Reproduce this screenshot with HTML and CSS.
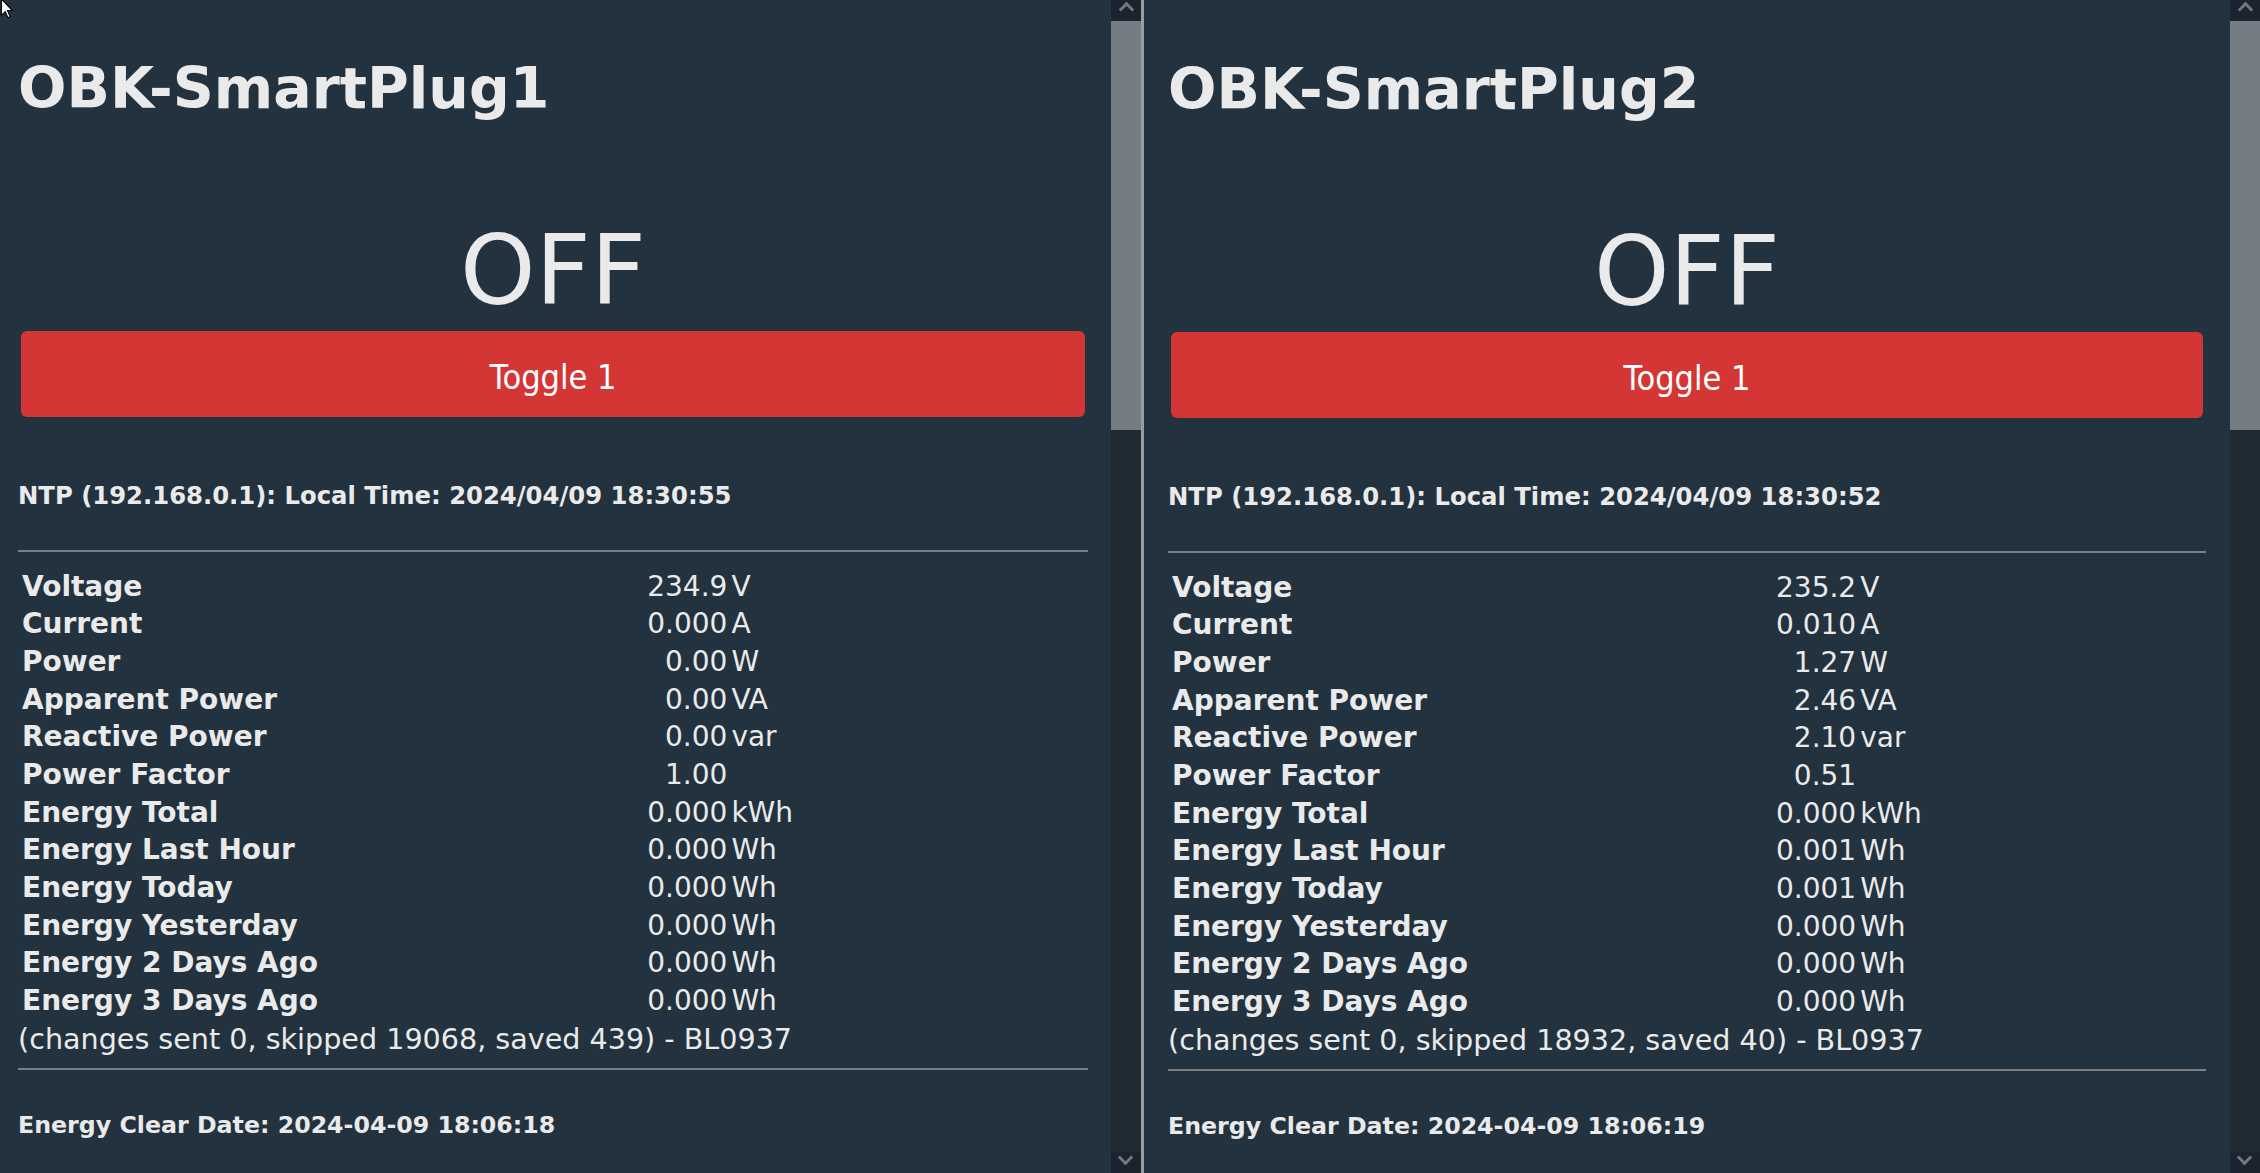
FILE: index.html
```html
<!DOCTYPE html>
<html lang="en">
<head>
    <meta charset="UTF-8">
    <meta name="viewport" content="width=device-width, initial-scale=1.0">
    <title>OBK SmartPlugs</title>
    <link rel="stylesheet" href="styles.css">
</head>
<body>

<!-- mouse pointer left in the corner of the capture -->
<svg class="pointer" width="16" height="22" viewBox="0 0 14 20">
    <path d="M1 0 L1 15 L4.5 11.5 L7 17 L9 16 L6.5 10.5 L11 10.5 Z" fill="#ffffff" stroke="#000000" stroke-width="1"/>
</svg>

<div class="desktop">

  <!-- Device 1 -->
  <div class="frame frame-left">
    <div class="page">
        <h1 class="title">OBK-SmartPlug1</h1>
        <div class="state">OFF</div>
        <button type="button" class="toggle">Toggle 1</button>
        <div class="info">NTP (192.168.0.1): Local Time: 2024/04/09 18:30:55</div>
        <hr class="rule">
        <table class="stats">
            <colgroup><col class="c-label"><col class="c-num"><col class="c-unit"></colgroup>
            <tr><th>Voltage</th><td class="num">234.9</td><td class="unit">V</td></tr>
            <tr><th>Current</th><td class="num">0.000</td><td class="unit">A</td></tr>
            <tr><th>Power</th><td class="num">0.00</td><td class="unit">W</td></tr>
            <tr><th>Apparent Power</th><td class="num">0.00</td><td class="unit">VA</td></tr>
            <tr><th>Reactive Power</th><td class="num">0.00</td><td class="unit">var</td></tr>
            <tr><th>Power Factor</th><td class="num">1.00</td><td class="unit"></td></tr>
            <tr><th>Energy Total</th><td class="num">0.000</td><td class="unit">kWh</td></tr>
            <tr><th>Energy Last Hour</th><td class="num">0.000</td><td class="unit">Wh</td></tr>
            <tr><th>Energy Today</th><td class="num">0.000</td><td class="unit">Wh</td></tr>
            <tr><th>Energy Yesterday</th><td class="num">0.000</td><td class="unit">Wh</td></tr>
            <tr><th>Energy 2 Days Ago</th><td class="num">0.000</td><td class="unit">Wh</td></tr>
            <tr><th>Energy 3 Days Ago</th><td class="num">0.000</td><td class="unit">Wh</td></tr>
        </table>
        <div class="changes">(changes sent 0, skipped 19068, saved 439) - BL0937</div>
        <hr class="rule rule-bottom">
        <div class="info info-clear">Energy Clear Date: 2024-04-09 18:06:18</div>
    </div>
    <div class="scrollbar">
        <div class="sb-arrow"><span class="chev"></span></div>
        <div class="sb-thumb"></div>
        <div class="sb-track"></div>
        <div class="sb-arrow sb-down"><span class="chev"></span></div>
    </div>
  </div>

  <div class="divider"></div>

  <!-- Device 2 -->
  <div class="frame frame-right">
    <div class="page">
        <h1 class="title">OBK-SmartPlug2</h1>
        <div class="state">OFF</div>
        <button type="button" class="toggle">Toggle 1</button>
        <div class="info">NTP (192.168.0.1): Local Time: 2024/04/09 18:30:52</div>
        <hr class="rule">
        <table class="stats">
            <colgroup><col class="c-label"><col class="c-num"><col class="c-unit"></colgroup>
            <tr><th>Voltage</th><td class="num">235.2</td><td class="unit">V</td></tr>
            <tr><th>Current</th><td class="num">0.010</td><td class="unit">A</td></tr>
            <tr><th>Power</th><td class="num">1.27</td><td class="unit">W</td></tr>
            <tr><th>Apparent Power</th><td class="num">2.46</td><td class="unit">VA</td></tr>
            <tr><th>Reactive Power</th><td class="num">2.10</td><td class="unit">var</td></tr>
            <tr><th>Power Factor</th><td class="num">0.51</td><td class="unit"></td></tr>
            <tr><th>Energy Total</th><td class="num">0.000</td><td class="unit">kWh</td></tr>
            <tr><th>Energy Last Hour</th><td class="num">0.001</td><td class="unit">Wh</td></tr>
            <tr><th>Energy Today</th><td class="num">0.001</td><td class="unit">Wh</td></tr>
            <tr><th>Energy Yesterday</th><td class="num">0.000</td><td class="unit">Wh</td></tr>
            <tr><th>Energy 2 Days Ago</th><td class="num">0.000</td><td class="unit">Wh</td></tr>
            <tr><th>Energy 3 Days Ago</th><td class="num">0.000</td><td class="unit">Wh</td></tr>
        </table>
        <div class="changes">(changes sent 0, skipped 18932, saved 40) - BL0937</div>
        <hr class="rule rule-bottom">
        <div class="info info-clear">Energy Clear Date: 2024-04-09 18:06:19</div>
    </div>
    <div class="scrollbar">
        <div class="sb-arrow"><span class="chev"></span></div>
        <div class="sb-thumb"></div>
        <div class="sb-track"></div>
        <div class="sb-arrow sb-down"><span class="chev"></span></div>
    </div>
  </div>

</div>

</body>
</html>
```

FILE: styles.css
```css
html, body {
    margin: 0;
    padding: 0;
    height: 100%;
    overflow: hidden;
}

body {
    font-family: "DejaVu Sans", Verdana, sans-serif;
    background-color: #22323f;
    color: #eaeaea;
}

.pointer {
    position: absolute;
    left: 0;
    top: -1px;
    z-index: 5;
}

/* Two browser windows side by side */
.desktop {
    display: flex;
    height: 1173px;
}

.frame {
    display: flex;
    background-color: #22323f;
}

.frame-left {
    width: 1141px;
}

.frame-right {
    flex: 1;
}

.divider {
    width: 3px;
    background-color: #9c9c9c;
}

.page {
    flex: 1;
    overflow: hidden;
}

.frame-left .page {
    padding: 56px 23px 0 18px;
}

.frame-right .page {
    padding: 57px 24px 0 24px;
}

/* Heading and state */
.title {
    margin: 0;
    font-size: 57px;
    line-height: 65px;
    font-weight: bold;
}

.state {
    margin-top: 95px;
    font-size: 96px;
    line-height: 110px;
    text-align: center;
}

.toggle {
    display: block;
    width: calc(100% - 6px);
    margin: 5px 3px 0;
    height: 86px;
    padding: 6px 0 0;
    border: none;
    border-radius: 6px;
    background-color: #d43535;
    color: #ffffff;
    font-family: "DejaVu Sans Condensed", "DejaVu Sans", sans-serif;
    font-size: 34px;
    line-height: 80px;
    vertical-align: top;
}

.info {
    margin-top: 65px;
    font-size: 24.3px;
    line-height: 28.5px;
    font-weight: bold;
}

.info-clear {
    margin-top: 41px;
    font-size: 23.7px;
}

.rule {
    margin: 39px 0 0;
    border: none;
    border-top: 2px solid #7c7f82;
    height: 0;
}

.rule-bottom {
    margin-top: 13px;
}

/* Sensor readings */
.stats {
    width: 100%;
    margin-top: 16px;
    border-collapse: collapse;
    table-layout: fixed;
    font-size: 28px;
    line-height: 37.68px;
}

.c-label {
    width: 58%;
}

.c-num {
    width: 8.3%;
}

.stats th {
    text-align: left;
    font-weight: bold;
    padding: 0 0 0 4px;
    white-space: nowrap;
}

.stats td {
    padding: 0;
    white-space: nowrap;
}

.stats .num {
    text-align: right;
}

.stats .unit {
    padding-left: 4px;
}

.changes {
    margin-top: 3px;
    font-size: 28.6px;
    line-height: 32.6px;
}

/* Window scrollbars */
.scrollbar {
    width: 30px;
    display: flex;
    flex-direction: column;
    background-color: #1f2a33;
}

.sb-arrow {
    height: 21px;
    background-color: #1b242e;
    display: flex;
    justify-content: center;
    align-items: flex-start;
}

.sb-down {
    align-items: flex-end;
    transform: rotate(180deg);
}

.chev {
    width: 8px;
    height: 8px;
    margin-top: 4px;
    border-left: 3px solid #6f7883;
    border-top: 3px solid #6f7883;
    transform: rotate(45deg);
}

.sb-thumb {
    height: 409px;
    background-color: #767c84;
}

.sb-track {
    flex: 1;
}
```
